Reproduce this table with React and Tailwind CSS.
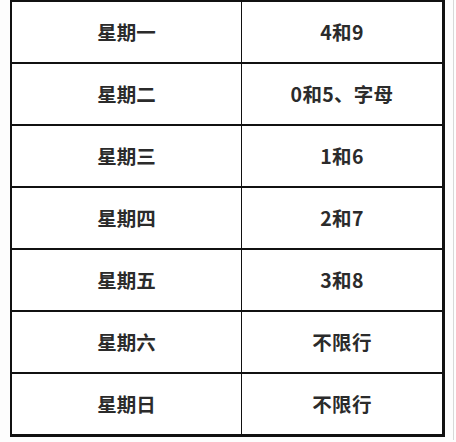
import React from "react";

const rows = [
  ["星期一", "4和9"],
  ["星期二", "0和5、字母"],
  ["星期三", "1和6"],
  ["星期四", "2和7"],
  ["星期五", "3和8"],
  ["星期六", "不限行"],
  ["星期日", "不限行"],
];

export default function App() {
  return (
    <div
      className="w-[456px] h-[442px] bg-[#fdfdfd] overflow-hidden flex"
      style={{ fontFamily: '"Noto Sans CJK SC", "Noto Sans", sans-serif' }}
    >
      <div className="ml-[10px] w-[435px] h-fit border-t-2 border-l-2 border-r-[3px] border-b-[3px] border-[#111] bg-white">
        {rows.map(([d, n], i) => (
          <div
            key={i}
            className={`grid grid-cols-[230px_1fr] h-[60px] ${i < rows.length - 1 ? "border-b-2 border-[#111] box-content" : ""}`}
          >
            <div className="flex items-center justify-center border-r-[1.5px] border-[#111] text-[19.5px] font-bold text-[#2b2b2b]">
              {d}
            </div>
            <div className="flex items-center justify-center text-[19.5px] font-bold text-[#2b2b2b] tracking-[0.3px]">
              {n}
            </div>
          </div>
        ))}
      </div>
      <div className="ml-[8px] w-[1px] h-[440px] bg-[#d8d8d8]" />
    </div>
  );
}
